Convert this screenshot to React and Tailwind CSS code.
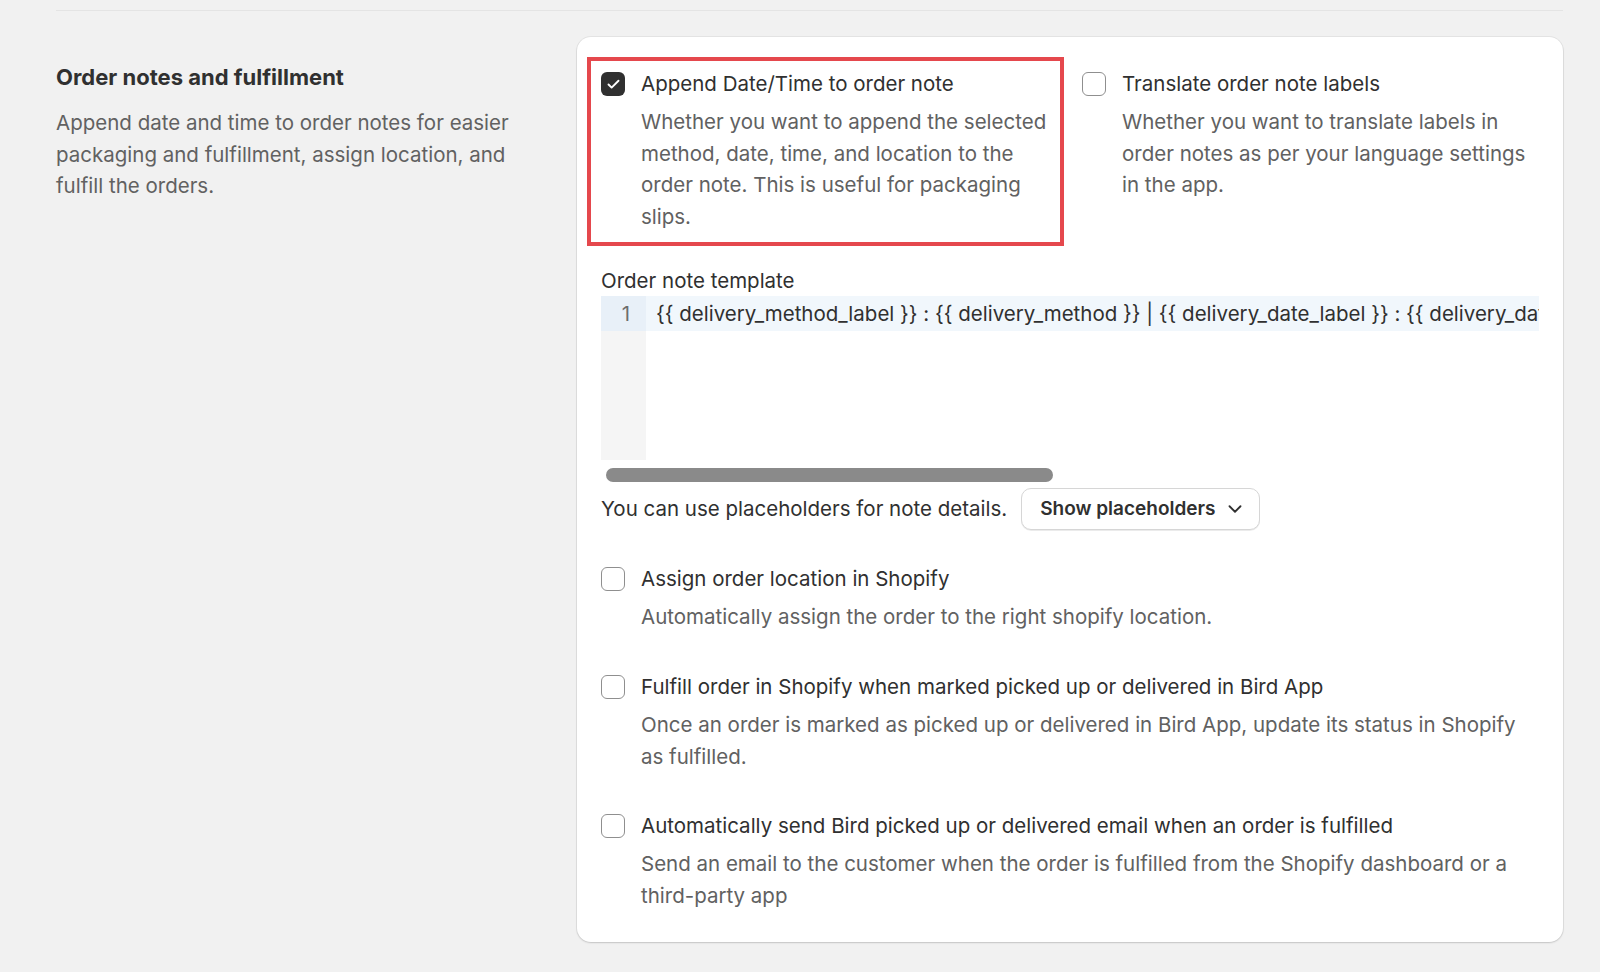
import { ChevronDown, Check } from "lucide-react";

function Box({ checked }) {
  return checked ? (
    <span className="w-6 h-6 shrink-0 rounded-[6px] bg-[#303030] flex items-center justify-center">
      <Check size={15} strokeWidth={3} className="text-white" />
    </span>
  ) : (
    <span className="w-6 h-6 shrink-0 rounded-[6px] border border-[#8f8f8f] bg-white" />
  );
}

function Option({ checked, title, children }) {
  return (
    <div className="flex gap-4">
      <div className="h-8 flex items-center">
        <Box checked={checked} />
      </div>
      <div className="flex-1 min-w-0">
        <div className="leading-8 text-[#303030]">{title}</div>
        <p className="mt-[6px] leading-[31.6px] text-[#616161]">{children}</p>
      </div>
    </div>
  );
}

export default function App() {
  const code =
    "{{ delivery_method_label }} : {{ delivery_method }} | {{ delivery_date_label }} : {{ delivery_date }} | {{ delivery_time_label }} : {{ delivery_time }}";

  return (
    <div className="min-h-screen bg-[#f1f1f1] pl-[56px] pr-[37px] pt-[10px] text-[20.5px] font-['Inter','Liberation_Sans',sans-serif]">
      <div className="h-px bg-[#e4e4e4]" />
      <div className="flex mt-[26px]">
        <div className="w-[521px] shrink-0 pr-[50px] pt-[26px]">
          <h2 className="font-bold text-[22px] leading-[28px] text-[#303030]">Order notes and fulfillment</h2>
          <p className="mt-[16px] leading-[31.6px] text-[#616161]">
            Append date and time to order notes for easier packaging and fulfillment, assign location, and fulfill the
            orders.
          </p>
        </div>

        <div className="flex-1 min-w-0 bg-white rounded-[14px] shadow-[0_1px_2px_rgba(0,0,0,0.14),0_0_0_1px_rgba(0,0,0,0.05)] px-6 pt-[31px] pb-[31px]">
          <div className="grid grid-cols-2 gap-6">
            <div className="relative">
              <div className="absolute -left-[14px] -top-[11px] -right-[6px] -bottom-[14px] border-4 border-[#e5484d] pointer-events-none" />
              <Option checked title="Append Date/Time to order note">
                Whether you want to append the selected method, date, time, and location to the order note. This is
                useful for packaging slips.
              </Option>
            </div>
            <Option title="Translate order note labels">
              Whether you want to translate labels in order notes as per your language settings in the app.
            </Option>
          </div>

          <div className="mt-[35px] leading-[28px] text-[#303030]">Order note template</div>
          <div className="mt-px h-[164px] flex overflow-hidden">
            <div className="w-[45px] shrink-0 bg-[#f5f5f5]">
              <div className="h-[35px] bg-[#e8f0f8] text-right pr-[16px] leading-[35px] text-[#6d6d6d]">1</div>
            </div>
            <div className="flex-1 min-w-0">
              <div className="h-[35px] bg-[#f1f7fc] pl-[10px] leading-[35px] text-[#303030] whitespace-nowrap overflow-hidden">
                {code}
              </div>
            </div>
          </div>
          <div className="mt-[8px] ml-[5px] w-[447px] h-[14px] rounded-full bg-[#8a8a8a]" />

          <div className="mt-[6px] flex items-center">
            <span className="text-[#303030]">You can use placeholders for note details.</span>
            <button className="ml-[14px] h-[42px] pl-[18px] pr-[13px] rounded-[10px] border border-[#d6d6d6] shadow-[0_1px_0_rgba(0,0,0,0.08)] bg-white flex items-center gap-[8px] font-semibold text-[19px] text-[#303030]">
              Show placeholders
              <ChevronDown size={22} strokeWidth={2} />
            </button>
          </div>

          <div className="mt-[33px] flex flex-col gap-[38px]">
            <Option title="Assign order location in Shopify">
              Automatically assign the order to the right shopify location.
            </Option>
            <Option title="Fulfill order in Shopify when marked picked up or delivered in Bird App">
              Once an order is marked as picked up or delivered in Bird App, update its status in Shopify as fulfilled.
            </Option>
            <Option title="Automatically send Bird picked up or delivered email when an order is fulfilled">
              Send an email to the customer when the order is fulfilled from the Shopify dashboard or a third-party app
            </Option>
          </div>
        </div>
      </div>
    </div>
  );
}
